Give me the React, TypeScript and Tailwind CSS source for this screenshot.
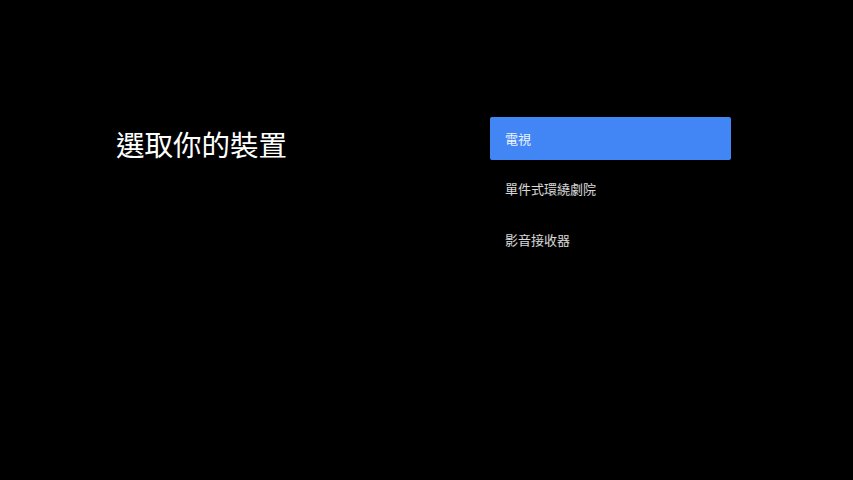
const items = ["電視", "單件式環繞劇院", "影音接收器"];

export default function App() {
  return (
    <div
      className="w-[853px] h-[480px] bg-black text-white flex"
      style={{ fontFamily: '"Noto Sans CJK TC", "Noto Sans", sans-serif' }}
    >
      <div className="w-[490px] pl-[116px] pt-[124px]">
        <h1 className="text-[28.5px] leading-[40px] font-normal">選取你的裝置</h1>
      </div>
      <div className="w-[241px] pt-[117px] flex flex-col gap-[7.5px]">
        {items.map((item, i) => (
          <div
            key={item}
            className={
              i === 0
                ? "h-[43px] rounded-[2px] bg-[#4286f5] px-[15px] flex items-center text-[13px] text-white/90"
                : "h-[43px] px-[15px] flex items-center text-[13px] text-white/85"
            }
          >
            {item}
          </div>
        ))}
      </div>
    </div>
  );
}
